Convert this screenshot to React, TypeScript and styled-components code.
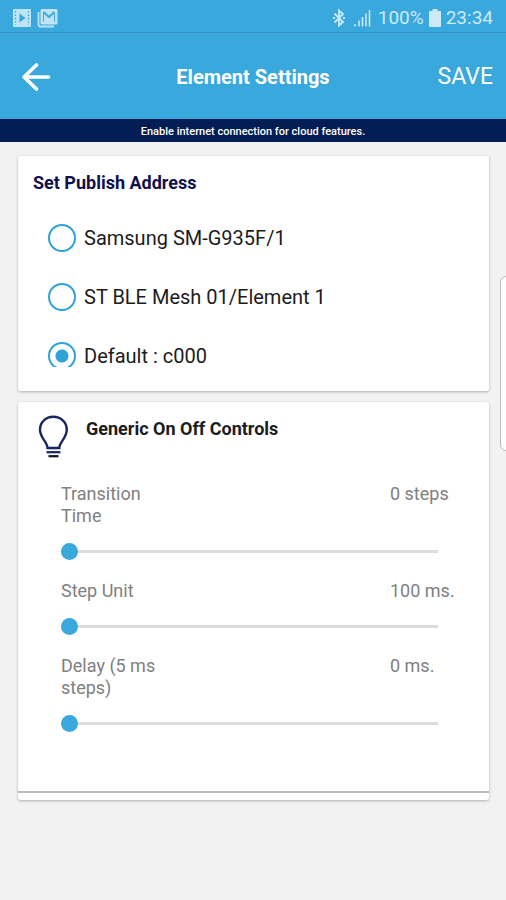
import React, { useState } from "react";
import styled, { createGlobalStyle } from "styled-components";

const blue = "#38a8dd";
const navy = "#021d53";

const GlobalStyle = createGlobalStyle`
  * { box-sizing: border-box; }
  body {
    margin: 0;
    background: #f2f2f2;
    color: #1c1c1c;
    font-family: Roboto, "Liberation Sans", sans-serif;
  }
  button, input { font: inherit; color: inherit; }
`;

const Screen = styled.div`
  position: relative;
  min-height: 100vh;
  overflow: hidden;
`;

const StatusBar = styled.div`
  display: flex;
  align-items: center;
  justify-content: space-between;
  height: 33px;
  padding: 4px 13px 0 12px;
  background: ${blue};
  border-bottom: 1px solid #2f90c0;
  color: #cdeaf7;
  font-size: 19px;
  line-height: 28px;
`;

const StatusGroup = styled.div`
  display: flex;
  align-items: center;
  gap: 5px;
`;

const AppBar = styled.header`
  display: grid;
  grid-template-columns: 1fr auto 1fr;
  align-items: center;
  height: 86px;
  padding: 2px 13px 0;
  background: ${blue};
  color: #fff;
`;

const BackButton = styled.button`
  justify-self: start;
  display: flex;
  padding: 0 7px;
  border: 0;
  background: none;
`;

const Title = styled.h1`
  margin: 0;
  font-size: 20px;
  font-weight: 700;
  line-height: 24px;
`;

const SaveButton = styled.button`
  justify-self: end;
  padding: 0;
  border: 0;
  background: none;
  font-size: 23px;
  line-height: 24px;
`;

const Notice = styled.p`
  margin: 0;
  height: 23px;
  background: ${navy};
  color: #fff;
  font-size: 11px;
  font-weight: 500;
  line-height: 25px;
  text-align: center;
`;

const Content = styled.main`
  display: flex;
  flex-direction: column;
  gap: 11px;
  padding: 14px 17px 0 18px;
`;

const Card = styled.section`
  border-radius: 3px;
  background: #fff;
  box-shadow: 0 1px 3px rgba(0, 0, 0, 0.28);
`;

const PublishCard = styled(Card)`
  padding: 15px 15px 24px;
`;

const PublishTitle = styled.h2`
  margin: 0;
  color: #10104c;
  font-size: 18px;
  font-weight: 700;
  line-height: 24px;
`;

const RadioList = styled.div`
  display: flex;
  flex-direction: column;
  gap: 31px;
  height: 172px;
  padding: 29px 15px 0;
  overflow: hidden;
`;

const RadioRow = styled.label`
  display: flex;
  flex-shrink: 0;
  align-items: center;
  gap: 8px;
  height: 28px;
  font-size: 20px;
  line-height: 28px;
`;

const Radio = styled.input`
  appearance: none;
  flex-shrink: 0;
  width: 28px;
  height: 28px;
  margin: 0;
  border: 2px solid #2fa2d8;
  border-radius: 50%;
  &:checked {
    background: radial-gradient(circle, #2fa2d8 6px, #fff 7px);
  }
`;

const ControlsHeader = styled.div`
  display: flex;
  align-items: flex-start;
  gap: 16px;
  padding: 13px 20px 0;
`;

const ControlsTitle = styled.h2`
  margin: 2px 0 0;
  font-size: 18px;
  font-weight: 700;
  line-height: 24px;
`;

const ControlsBody = styled.div`
  display: flex;
  flex-direction: column;
  gap: 20px;
  padding: 24px 0 59px 43px;
`;

const Setting = styled.div`
  display: grid;
  grid-template-columns: 110px 1fr 99px;
  row-gap: 15px;
  color: #808080;
  font-size: 18px;
  line-height: 22px;
`;

const SettingValue = styled.output`
  grid-column: 3;
  white-space: nowrap;
`;

const Slider = styled.input`
  appearance: none;
  grid-column: 1 / -1;
  height: 18px;
  margin: 0 51px 0 0;
  background: linear-gradient(#dcdcdc, #dcdcdc) center / 100% 3px no-repeat;
  &::-webkit-slider-thumb {
    appearance: none;
    width: 17px;
    height: 17px;
    border-radius: 50%;
    background: ${blue};
  }
`;

const CardFooter = styled.div`
  height: 9px;
  border-top: 2px solid #bcbcbc;
`;

const EdgeHandle = styled.div`
  position: absolute;
  top: 276px;
  right: -6px;
  width: 12px;
  height: 175px;
  border: 1px solid #bdbdbd;
  border-radius: 6px;
  background: #fcfcfc;
`;

const VideoIcon = () => (
  <svg width="20" height="20" viewBox="0 0 20 20" aria-hidden="true">
    <rect x="1" y="1" width="18" height="18" rx="1" fill="#bfe4f5" />
    <path d="M3.5 3v14M16.5 3v14" stroke={blue} strokeWidth="1.2" strokeDasharray="1.6 1.8" />
    <path d="M7.5 5.5v9l6-4.5z" fill={blue} />
  </svg>
);

const MailStackIcon = () => (
  <svg width="21" height="20" viewBox="0 0 21 20" aria-hidden="true">
    <path d="M1.5 4v12.5q0 2 2 2H17" fill="none" stroke="#bfe4f5" strokeWidth="1.8" />
    <rect x="3.500" y="1" width="17" height="15.5" rx="1.5" fill="#bfe4f5" />
    <path d="M6.500 13.500V4.500M17.500 4.500v9" fill="none" stroke={blue} strokeWidth="1" />
    <path d="M6.500 4l5.500 5L17.500 4" fill="none" stroke={blue} strokeWidth="2" />
  </svg>
);

const BluetoothIcon = () => (
  <svg width="14" height="20" viewBox="0 0 14 20" fill="none" stroke="currentColor" aria-hidden="true">
    <path d="M2.5 5.500l8.500 8.500L7 17.500v-15L11 6l-8.500 8.500" strokeWidth="1.8" />
    <path d="M1 10h2M11 10h2" strokeWidth="1.800" />
  </svg>
);

const SignalIcon = () => (
  <svg width="22" height="18" viewBox="0 0 22 18" fill="none" stroke="currentColor" strokeWidth="1.5" aria-hidden="true">
    <path d="M4 15v2.500M8 11.500v6M11.500 8v9.500M15 4.500v13M18.500 1v16.500" />
  </svg>
);

const BatteryIcon = () => (
  <svg width="12" height="18" viewBox="0 0 12 18" fill="currentColor" aria-hidden="true">
    <path d="M3.5 0h5v2H11q1 0 1 1v14q0 1-1 1H1q-1 0-1-1V3q0-1 1-1h2.500z" />
  </svg>
);

const BackIcon = () => (
  <svg width="32" height="30" viewBox="0 0 32 30" fill="none" stroke="#fff" strokeWidth="3.6" strokeLinecap="round" strokeLinejoin="round" aria-hidden="true">
    <path d="M16.5 3L4 15l12.500 12M4.500 15H28.500" />
  </svg>
);

const BulbIcon = () => (
  <svg width="32" height="44" viewBox="0 0 32 44" fill="none" aria-hidden="true">
    <path
      d="M9.500 33C9.500 27 2 23 2 14.800C2 7 8 1.800 15.300 1.800S28.800 7 28.800 14.800C28.800 23 21.300 27 21.300 33Z"
      stroke="#17265f"
      strokeWidth="2.400"
    />
    <path d="M8.500 37.200h14" stroke="#17265f" strokeWidth="2.200" />
    <path d="M10.500 41.200h10" stroke="#101020" strokeWidth="2.200" />
  </svg>
);

const addresses = ["Samsung SM-G935F/1", "ST BLE Mesh 01/Element 1", "Default : c000"];

const settings = [
  { id: "transition", label: "Transition Time", scale: 1, unit: "steps", base: 0 },
  { id: "unit", label: "Step Unit", scale: 100, unit: "ms.", base: 100 },
  { id: "delay", label: "Delay (5 ms steps)", scale: 5, unit: "ms.", base: 0 },
];

export default function App() {
  const [address, setAddress] = useState(addresses[2]);
  const [values, setValues] = useState([0, 0, 0]);

  return (
    <>
      <GlobalStyle />
      <Screen>
        <StatusBar>
          <StatusGroup>
            <VideoIcon />
            <MailStackIcon />
          </StatusGroup>
          <StatusGroup>
            <BluetoothIcon />
            <SignalIcon />
            <span>100%</span>
            <BatteryIcon />
            <span>23:34</span>
          </StatusGroup>
        </StatusBar>
        <AppBar>
          <BackButton aria-label="Back">
            <BackIcon />
          </BackButton>
          <Title>Element Settings</Title>
          <SaveButton>SAVE</SaveButton>
        </AppBar>
        <Notice>Enable internet connection for cloud features.</Notice>
        <Content>
          <PublishCard>
            <PublishTitle id="publish-title">Set Publish Address</PublishTitle>
            <RadioList role="radiogroup" aria-labelledby="publish-title">
              {addresses.map((name) => (
                <RadioRow key={name}>
                  <Radio type="radio" name="address" checked={address === name} onChange={() => setAddress(name)} />
                  {name}
                </RadioRow>
              ))}
            </RadioList>
          </PublishCard>
          <Card>
            <ControlsHeader>
              <BulbIcon />
              <ControlsTitle>Generic On Off Controls</ControlsTitle>
            </ControlsHeader>
            <ControlsBody>
              {settings.map((s, i) => (
                <Setting key={s.id}>
                  <label htmlFor={s.id}>{s.label}</label>
                  <SettingValue htmlFor={s.id}>
                    {`${s.base + values[i] * s.scale} ${s.unit}`}
                  </SettingValue>
                  <Slider
                    id={s.id}
                    type="range"
                    min={0}
                    max={50}
                    value={values[i]}
                    onChange={(e) => setValues(values.map((v, j) => (j === i ? Number(e.target.value) : v)))}
                  />
                </Setting>
              ))}
            </ControlsBody>
            <CardFooter />
          </Card>
        </Content>
        <EdgeHandle />
      </Screen>
    </>
  );
}
